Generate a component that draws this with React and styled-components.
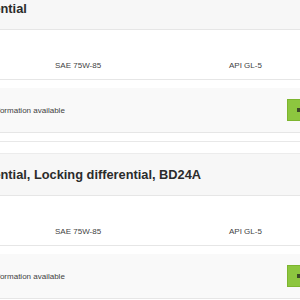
import React from "react";
import styled, { createGlobalStyle } from "styled-components";

const Global = createGlobalStyle`
  html, body { margin: 0; padding: 0; background: #ffffff; overflow: hidden; }
  body { font-family: "Liberation Sans", Arial, sans-serif; }
`;

const Page = styled.div`
  width: 440px;
  margin: -13px 0 0 -40px;
  display: flex;
  flex-direction: column;
  gap: 11px;
`;

const Section = styled.section`
  display: flex;
  flex-direction: column;
  border-bottom: 1px solid #e8e8e8;
  padding-bottom: 8px;
`;

const Header = styled.div`
  height: 41px;
  display: flex;
  align-items: center;
  padding-left: 0;
  background: #f7f7f7;
  border-top: 1px solid #ececec;
  border-bottom: 1px solid #e6e6e6;
`;

const Title = styled.h2`
  margin: 0;
  font-size: 12.8px;
  font-weight: 700;
  color: #2b2b2b;
  white-space: nowrap;
`;

const SpecRow = styled.div`
  display: grid;
  grid-template-columns: 174px auto;
  padding: 31px 0 8px 95px;
  height: 10px;
  border-bottom: 1px solid #e6e6e6;
  margin-bottom: 8px;
`;

const Spec = styled.span`
  font-size: 8px;
  line-height: 10px;
  color: #3f3f3f;
  white-space: nowrap;
`;

const InfoPanel = styled.div`
  height: 44px;
  display: grid;
  grid-template-columns: 308px auto;
  align-items: center;
  padding-left: 19px;
  background: #f9f9f9;
  border-bottom: 1px solid #e6e6e6;
`;

const InfoText = styled.span`
  font-size: 8px;
  color: #3f3f3f;
  white-space: nowrap;
`;

const GreenButton = styled.button`
  height: 22px;
  display: flex;
  align-items: center;
  gap: 4px;
  padding: 0 8px 0 9px;
  background: #8dc63f;
  border: 1px solid #7db52f;
  border-radius: 0;
  font-family: inherit;
  font-size: 8px;
  font-weight: 700;
  color: #222;
  white-space: nowrap;
`;

const ArrowIcon = () => (
  <svg width="10" height="8" viewBox="0 0 10 8" aria-hidden="true">
    <path d="M0 3h8M0 5h8" stroke="#222" strokeWidth="1.4" fill="none" />
  </svg>
);

const items = [
  "Differential",
  "Differential, Locking differential, BD24A",
];

const Block = ({ title }) => (
  <Section>
    <Header>
      <Title>{title}</Title>
    </Header>
    <SpecRow>
      <Spec>SAE 75W-85</Spec>
      <Spec>API GL-5</Spec>
    </SpecRow>
    <InfoPanel>
      <InfoText>No information available</InfoText>
      <GreenButton>
        <ArrowIcon />
        Details
      </GreenButton>
    </InfoPanel>
  </Section>
);

export default function App() {
  return (
    <>
      <Global />
      <Page>
        {items.map((t) => (
          <Block key={t} title={t} />
        ))}
      </Page>
    </>
  );
}
